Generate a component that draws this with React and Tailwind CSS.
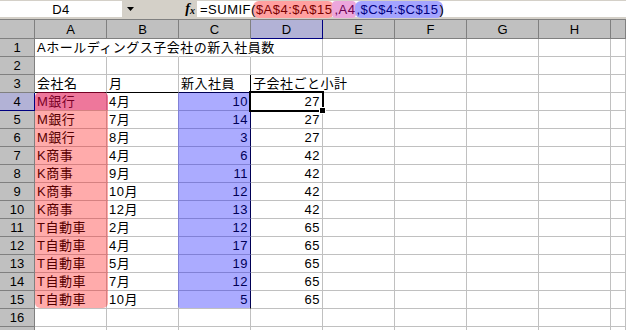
import React from 'react';

const data = {
  1: ['Aホールディングス子会社の新入社員数'],
  3: ['会社名', '月', '新入社員', '子会社ごと小計'],
  4: ['M銀行', '4月', '10', '27'],
  5: ['M銀行', '7月', '14', '27'],
  6: ['M銀行', '8月', '3', '27'],
  7: ['K商事', '4月', '6', '42'],
  8: ['K商事', '9月', '11', '42'],
  9: ['K商事', '10月', '12', '42'],
  10: ['K商事', '12月', '13', '42'],
  11: ['T自動車', '2月', '12', '65'],
  12: ['T自動車', '4月', '17', '65'],
  13: ['T自動車', '5月', '19', '65'],
  14: ['T自動車', '7月', '12', '65'],
  15: ['T自動車', '10月', '5', '65'],
};

const cols = ['A', 'B', 'C', 'D', 'E', 'F', 'G', 'H', 'I'];
const rows = Array.from({ length: 17 }, (_, i) => i + 1);

function cellClass(r, ci) {
  const w = ci < 8 ? 'w-[72px] flex-none' : 'flex-1';
  let br = 'border-r-[#c0c0c0]';
  if (r === 1 && ci < 3) br = 'border-r-transparent';
  if (r === 3 && ci === 3) br = 'border-r-transparent';
  if (r >= 3 && r <= 15 && ci === 2) br = 'border-r-black';
  let bb = 'border-b-[#c0c0c0]';
  if (r === 3 && ci <= 3) bb = 'border-b-black';
  const numeric = r >= 4 && r <= 15 && (ci === 2 || ci === 3);
  const align = numeric ? 'justify-end pr-[2px]' : 'justify-start pl-[2px]';
  return `${w} h-[18px] border-r border-b ${br} ${bb} flex ${align} items-center whitespace-nowrap overflow-visible`;
}

export default function App() {
  return (
    <div className="relative w-[626px] h-[330px] overflow-hidden bg-white text-black font-['Liberation_Sans','Noto_Sans_CJK_JP',sans-serif] text-[13px] tracking-[0.5px] leading-[17px]">
      {/* Formula bar */}
      <div className="h-[20px] bg-[#d4d0c8] pt-[1px] pb-[2px] border-b border-b-[#808080] flex">
        <div className="w-[122px] h-full bg-white flex items-center justify-center">D4</div>
        <div className="w-[16px] h-full flex items-center justify-center">
          <svg width="7" height="4" viewBox="0 0 7 4"><polygon points="0,0 7,0 3.5,4" fill="#000" /></svg>
        </div>
        <div className="w-[59px] h-full flex items-center justify-end pr-[2px] font-['Liberation_Serif',serif] italic font-bold tracking-normal">
          <span className="text-[14px] leading-none">f</span>
          <span className="text-[10px] leading-none mt-[3px]">x</span>
        </div>
        <div className="flex-1 h-full bg-white flex items-center pl-[3px] whitespace-nowrap">
          <span className="relative z-10">=SUMIF(</span>
          <span className="bg-[#ffa0a0] text-[#7a0000] rounded-[6px] -ml-[3px] pl-[3px] pr-[2px]">$A$4:$A$15</span>
          <span className="bg-[#eca6dc] text-[#6a0050] rounded-[4px] -ml-[2px] pl-[2px] pr-[1px]">,A4</span>
          <span className="bg-[#a4a4ff] text-[#000080] rounded-[6px] -ml-[1px] pl-[1px] pr-[4px]">,$C$4:$C$15</span>
          <span className="relative z-10 -ml-[3px]">)</span>
        </div>
      </div>

      {/* Column headers */}
      <div className="h-[19px] flex bg-[#c0c0c0] tracking-normal">
        <div className="w-[35px] flex-none border-r border-b border-[#808080]" />
        {cols.map((c, ci) => (
          <div
            key={c}
            className={`${ci < 8 ? 'w-[72px] flex-none' : 'flex-1'} border-r border-b flex items-center justify-center ${
              c === 'D' ? 'bg-[#b2b2d6] border-r-[#000080] border-b-[#000080]' : 'border-[#808080]'
            }`}
          >
            {ci < 8 ? c : ''}
          </div>
        ))}
      </div>

      {/* Rows */}
      {rows.map((r) => {
        const vals = data[r] || [];
        return (
          <div key={r} className="h-[18px] flex">
            <div
              className={`w-[35px] flex-none border-r border-b flex items-center justify-center tracking-normal ${
                r === 4 ? 'bg-[#b2b2d6] border-[#000080]' : 'bg-[#c0c0c0] border-[#808080]'
              }`}
            >
              {r < 17 ? r : ''}
            </div>
            {cols.map((c, ci) => (
              <div key={c} className={cellClass(r, ci)}>
                {vals[ci] || ''}
              </div>
            ))}
          </div>
        );
      })}

      {/* Range overlays */}
      <div className="absolute left-[35px] top-[92px] w-[73px] h-[216px] rounded-[5px] bg-[rgba(255,0,0,0.33)] pointer-events-none" />
      <div className="absolute left-[35px] top-[92px] w-[73px] h-[18px] rounded-t-[5px] bg-[rgba(200,0,120,0.3)] pointer-events-none" />
      <div className="absolute left-[178px] top-[92px] w-[73px] h-[216px] rounded-[2px] bg-[rgba(0,0,255,0.33)] pointer-events-none" />

      {/* Active cell */}
      <div className="absolute left-[249px] top-[91px] w-[75px] h-[21px] border-2 border-black pointer-events-none" />
      <div className="absolute left-[319px] top-[107px] w-[7px] h-[7px] bg-black border border-white pointer-events-none" />
    </div>
  );
}
